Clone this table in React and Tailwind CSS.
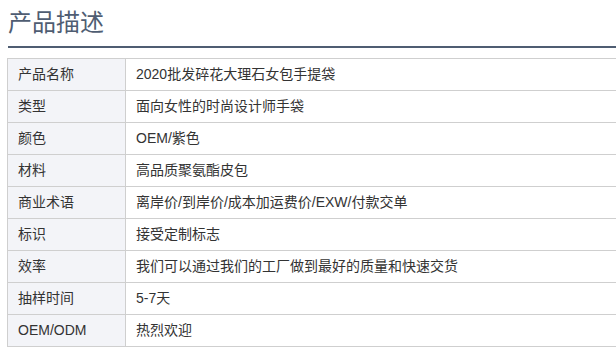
import React from "react";

const rows = [
  ["产品名称", "2020批发碎花大理石女包手提袋"],
  ["类型", "面向女性的时尚设计师手袋"],
  ["颜色", "OEM/紫色"],
  ["材料", "高品质聚氨酯皮包"],
  ["商业术语", "离岸价/到岸价/成本加运费价/EXW/付款交单"],
  ["标识", "接受定制标志"],
  ["效率", "我们可以通过我们的工厂做到最好的质量和快速交货"],
  ["抽样时间", "5-7天"],
  ["OEM/ODM", "热烈欢迎"],
];

const App = () => {
  return (
    <div
      className="w-[616px] h-[357px] bg-white overflow-hidden pl-2"
      style={{ fontFamily: '"Liberation Sans", "Noto Sans CJK SC", sans-serif' }}
    >
      {/* Title */}
      <div className="h-[48px] border-b-2 border-[#4f5d72] flex items-start">
        <h2 className="text-[24px] leading-[24px] mt-[11px] text-[#4f5d72]">
          产品描述
        </h2>
      </div>

      {/* Spec table */}
      <table className="mt-[10px] -ml-[1px] w-[620px] border-collapse text-[14px] text-[#333]">
        <tbody>
          {rows.map(([label, value]) => (
            <tr key={label} className="h-[32px]">
              <td className="w-[118px] border border-[#cfcfcf] bg-[#f3f4f8] pl-[10px] py-0">
                {label}
              </td>
              <td className="border border-[#cfcfcf] pl-[10px] py-0">
                {value}
              </td>
            </tr>
          ))}
        </tbody>
      </table>
    </div>
  );
};

export default App;
